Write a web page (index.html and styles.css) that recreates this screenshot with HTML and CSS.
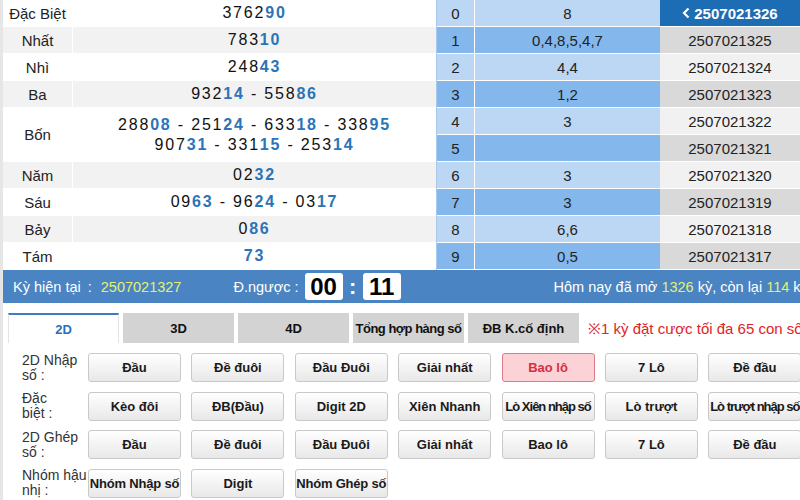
FILE: index.html
```html
<!DOCTYPE html>
<html lang="vi">
<head>
<meta charset="utf-8">
<title>Kết quả</title>
<link rel="stylesheet" href="styles.css">
</head>
<body>
<div class="page">
  <div class="top">
    <div class="prizes">
      <div class="prow"><div class="plabel">Đặc Biệt</div><div class="pnums"><span>3762<b>90</b></span></div></div>
      <div class="prow alt"><div class="plabel">Nhất</div><div class="pnums"><span>783<b>10</b></span></div></div>
      <div class="prow"><div class="plabel">Nhì</div><div class="pnums"><span>248<b>43</b></span></div></div>
      <div class="prow alt"><div class="plabel">Ba</div><div class="pnums"><span>932<b>14</b> - 558<b>86</b></span></div></div>
      <div class="prow tall"><div class="plabel">Bốn</div><div class="pnums"><span>288<b>08</b> - 251<b>24</b> - 633<b>18</b> - 338<b>95</b></span><span>907<b>31</b> - 331<b>15</b> - 253<b>14</b></span></div></div>
      <div class="prow alt"><div class="plabel">Năm</div><div class="pnums"><span>02<b>32</b></span></div></div>
      <div class="prow"><div class="plabel">Sáu</div><div class="pnums"><span>09<b>63</b> - 96<b>24</b> - 03<b>17</b></span></div></div>
      <div class="prow alt"><div class="plabel">Bảy</div><div class="pnums"><span>0<b>86</b></span></div></div>
      <div class="prow"><div class="plabel">Tám</div><div class="pnums"><span><b>73</b></span></div></div>
    </div>
    <div class="heads">
      <div class="hrow"><div class="hd">0</div><div class="hv">8</div></div>
      <div class="hrow alt"><div class="hd">1</div><div class="hv">0,4,8,5,4,7</div></div>
      <div class="hrow"><div class="hd">2</div><div class="hv">4,4</div></div>
      <div class="hrow alt"><div class="hd">3</div><div class="hv">1,2</div></div>
      <div class="hrow"><div class="hd">4</div><div class="hv">3</div></div>
      <div class="hrow alt"><div class="hd">5</div><div class="hv"></div></div>
      <div class="hrow"><div class="hd">6</div><div class="hv">3</div></div>
      <div class="hrow alt"><div class="hd">7</div><div class="hv">3</div></div>
      <div class="hrow"><div class="hd">8</div><div class="hv">6,6</div></div>
      <div class="hrow alt"><div class="hd">9</div><div class="hv">0,5</div></div>
    </div>
    <div class="periods">
      <div class="per cur"><svg class="chev" width="8" height="12" viewBox="0 0 8 12"><polyline points="6.5,1.5 2,6 6.5,10.5" fill="none" stroke="#fff" stroke-width="2.2"/></svg>2507021326</div>
      <div class="per alt">2507021325</div>
      <div class="per">2507021324</div>
      <div class="per alt">2507021323</div>
      <div class="per">2507021322</div>
      <div class="per alt">2507021321</div>
      <div class="per">2507021320</div>
      <div class="per alt">2507021319</div>
      <div class="per">2507021318</div>
      <div class="per alt">2507021317</div>
    </div>
  </div>

  <div class="bar">
    <span>Kỳ hiện tại</span><span class="colon">:</span><span class="hl">2507021327</span>
    <span class="cd">Đ.ngược :</span>
    <span class="tbox">00</span><span class="tsep">:</span><span class="tbox">11</span>
    <span class="today">Hôm nay đã mở <span class="hl">1326</span> kỳ, còn lại <span class="hl">114</span> kỳ</span>
  </div>

  <div class="tabs">
    <div class="tab on">2D</div>
    <div class="tab">3D</div>
    <div class="tab">4D</div>
    <div class="tab narrow">Tổng hợp hàng số</div>
    <div class="tab">ĐB K.cố định</div>
    <div class="note">※1 kỳ đặt cược tối đa 65 con số</div>
  </div>

  <div class="grid">
    <div class="brow">
      <div class="blabel">2D Nhập<br>số :</div>
      <div class="btns">
        <div class="btn">Đầu</div><div class="btn">Đề đuôi</div><div class="btn">Đầu Đuôi</div><div class="btn">Giải nhất</div><div class="btn active">Bao lô</div><div class="btn">7 Lô</div><div class="btn">Đề đầu</div>
      </div>
    </div>
    <div class="brow">
      <div class="blabel">Đặc<br>biệt :</div>
      <div class="btns">
        <div class="btn">Kèo đôi</div><div class="btn">ĐB(Đầu)</div><div class="btn">Digit 2D</div><div class="btn">Xiên Nhanh</div><div class="btn tight">Lò Xiên nhập số</div><div class="btn">Lò trượt</div><div class="btn tight">Lò trượt nhập số</div>
      </div>
    </div>
    <div class="brow">
      <div class="blabel">2D Ghép<br>số :</div>
      <div class="btns">
        <div class="btn">Đầu</div><div class="btn">Đề đuôi</div><div class="btn">Đầu Đuôi</div><div class="btn">Giải nhất</div><div class="btn">Bao lô</div><div class="btn">7 Lô</div><div class="btn">Đề đầu</div>
      </div>
    </div>
    <div class="brow">
      <div class="blabel">Nhóm hậu<br>nhị :</div>
      <div class="btns">
        <div class="btn semi">Nhóm Nhập số</div><div class="btn">Digit</div><div class="btn semi">Nhóm Ghép số</div>
      </div>
    </div>
  </div>
</div>
</body>
</html>
```

FILE: styles.css
```css
* { box-sizing: border-box; }

html, body {
  margin: 0;
  padding: 0;
}

body {
  width: 800px;
  height: 500px;
  overflow: hidden;
  background: #fff;
  font-family: "Liberation Sans", Arial, sans-serif;
  color: #222;
}

.page {
  width: 800px;
  height: 500px;
  border-left: 3px solid #e6e6e6;
}

/* top tables */
.top {
  display: flex;
  height: 270px;
}

.prizes {
  width: 434px;
  flex: none;
  border-right: 1px solid #a9c9ec;
}

.prow {
  display: flex;
  height: 27px;
  border-bottom: 1px solid #fff;
  background: #fff;
}

.prow.alt { background: #f2f2f2; }
.prow.tall { height: 54px; }

.plabel {
  width: 70px;
  flex: none;
  border-right: 1px solid #fff;
  display: flex;
  align-items: center;
  justify-content: center;
  font-size: 15px;
  color: #222;
}

.pnums {
  flex: 1;
  display: flex;
  flex-direction: column;
  align-items: center;
  justify-content: center;
  font-size: 16px;
  line-height: 20px;
  letter-spacing: 1.8px;
  color: #111;
  white-space: pre;
}

.pnums b { color: #2b74b7; }

.heads {
  width: 223px;
  flex: none;
}

.hrow {
  display: flex;
  height: 27px;
  border-bottom: 1px solid #fff;
  background: #bcd7f3;
  font-size: 15px;
  color: #222;
}

.hrow.alt { background: #84b8ed; }

.hd {
  width: 38px;
  flex: none;
  border-right: 1px solid #fff;
  display: flex;
  align-items: center;
  justify-content: center;
}

.hv {
  flex: 1;
  display: flex;
  align-items: center;
  justify-content: center;
}

.periods {
  flex: 1;
}

.per {
  height: 27px;
  border-bottom: 1px solid #fff;
  background: #f1f1f1;
  display: flex;
  align-items: center;
  justify-content: center;
  font-size: 15px;
  color: #222;
}

.per.alt { background: #d9d9d9; }

.per.cur {
  background: #1d6db4;
  color: #fff;
  font-weight: bold;
}

.chev { margin-right: 4px; }

/* blue bar */
.bar {
  height: 33px;
  background: #4a84c2;
  display: flex;
  align-items: center;
  padding-left: 10px;
  color: #fff;
  font-size: 14.5px;
  white-space: nowrap;
}

.colon { margin: 0 9px 0 7px; }
.hl { color: #e6ef72; }
.cd { margin: 0 6px 0 52px; }

.tbox {
  width: 38px;
  height: 27px;
  background: #fff;
  border-radius: 3px;
  color: #000;
  font-weight: bold;
  font-size: 24px;
  display: flex;
  align-items: center;
  justify-content: center;
  flex: none;
}

.tsep {
  width: 20px;
  text-align: center;
  font-weight: bold;
  font-size: 22px;
  flex: none;
}

.today { margin-left: 153px; }

/* tabs */
.tabs {
  display: flex;
  gap: 4px;
  align-items: center;
  margin-top: 10px;
  padding-left: 5px;
  height: 30px;
  white-space: nowrap;
}

.tab {
  width: 111px;
  height: 30px;
  flex: none;
  background: #d3d3d3;
  display: flex;
  align-items: center;
  justify-content: center;
  font-weight: bold;
  font-size: 13px;
  color: #111;
}

.tab.on {
  background: #fff;
  color: #2c6fb7;
  border-top: 2px solid #3d7cc0;
  border-left: 1px solid #e4e4e4;
  border-right: 1px solid #e4e4e4;
}

.tab.narrow { letter-spacing: -0.5px; }

.note {
  color: #e02424;
  font-size: 15px;
  margin-left: 5px;
}

/* buttons */
.grid {
  margin-top: 10px;
  padding-left: 19px;
  display: flex;
  flex-direction: column;
  gap: 9.5px;
}

.brow {
  display: flex;
  align-items: center;
  height: 29px;
}

.blabel {
  width: 66px;
  flex: none;
  font-size: 14px;
  line-height: 15px;
  color: #333;
}

.btns {
  display: flex;
  gap: 10.4px;
}

.btn {
  width: 93px;
  height: 29px;
  flex: none;
  display: flex;
  align-items: center;
  justify-content: center;
  background: linear-gradient(#ffffff, #e8e8e8);
  border: 1px solid #c9c9c9;
  border-radius: 3px;
  font-weight: bold;
  font-size: 13px;
  color: #1a1a1a;
  white-space: nowrap;
}

.btn.active {
  background: #fbd2d6;
  border-color: #e07a85;
  color: #d6303f;
}

.btn.tight { letter-spacing: -1px; }
.btn.semi { letter-spacing: -0.2px; }
```
